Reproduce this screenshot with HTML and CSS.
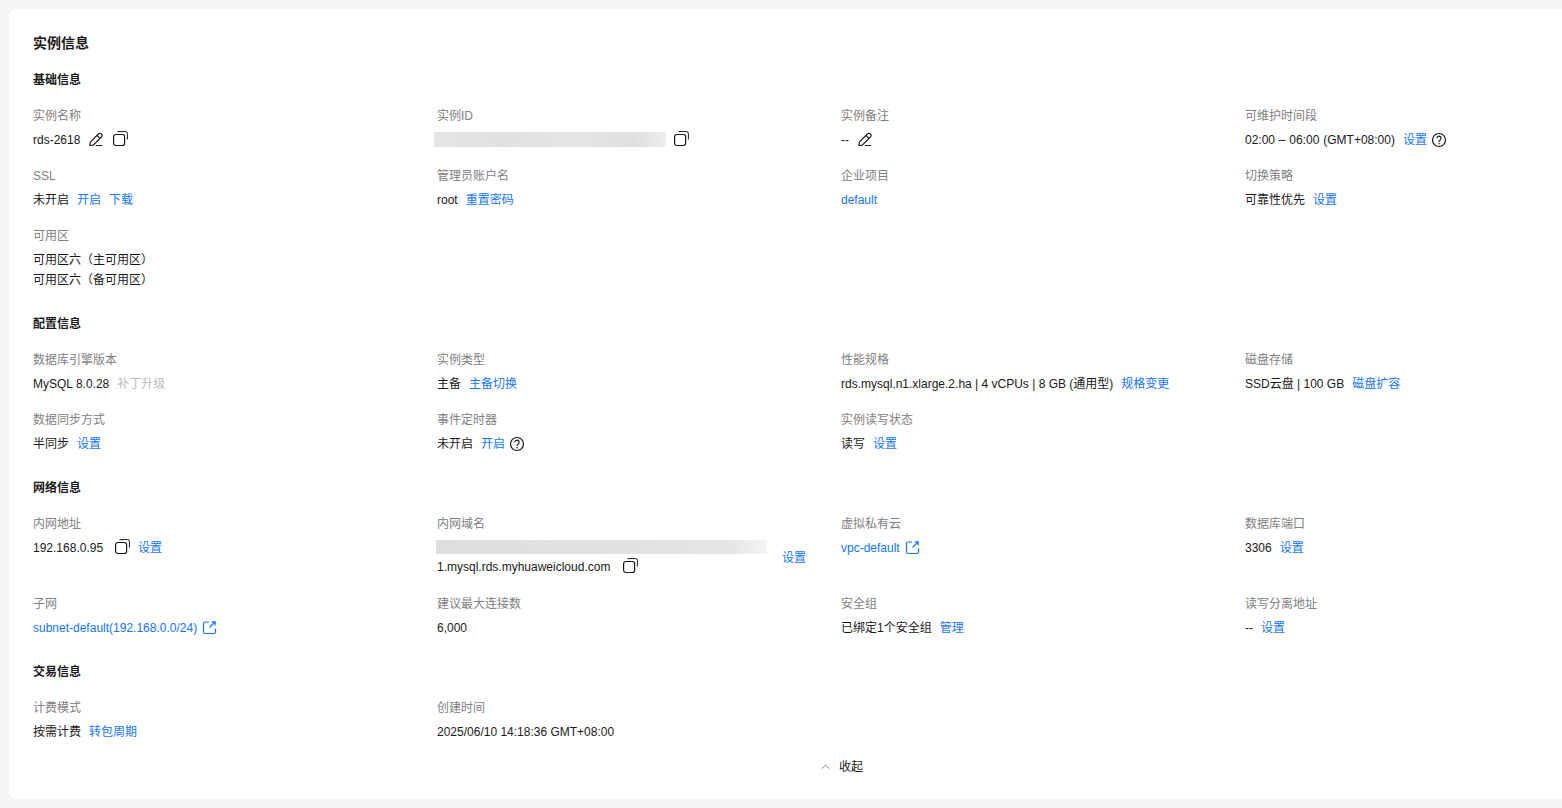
FILE: index.html
```html
<!DOCTYPE html>
<html lang="zh-CN">
<head>
<meta charset="utf-8">
<title>实例信息</title>
<link rel="stylesheet" href="styles.css">
</head>
<body>
<svg class="sprites" width="0" height="0" aria-hidden="true">
  <symbol id="i-edit" viewBox="0 0 16 16"><path d="M2.300 11.200 10.400 3a2.100 2.100 0 0 1 3 3l-8.200 8.100-3.400.3.500-3.200ZM9 4.500l2.900 2.900M7.800 14.500h6.400" fill="none" stroke="currentColor" stroke-width="1.100"/></symbol>
  <symbol id="i-copy" viewBox="0 0 16 16"><rect x="1.600" y="3.500" width="11" height="11" rx="2.200" fill="none" stroke="currentColor" stroke-width="1.200"/><path d="M5.500.6h8A1.800 1.800 0 0 1 15.400 2.500V8.500" fill="none" stroke="currentColor" stroke-width="1"/></symbol>
  <symbol id="i-help" viewBox="0 0 16 16"><circle cx="8" cy="8" r="6.500" fill="none" stroke="currentColor" stroke-width="1.200"/><path d="M5.900 6.300a2.100 2.100 0 1 1 3.400 1.600c-.8.600-1.300 1-1.300 2" fill="none" stroke="currentColor" stroke-width="1.200"/><circle cx="8" cy="11.700" r=".8" fill="currentColor"/></symbol>
  <symbol id="i-link" viewBox="0 0 16 16"><path d="M8 3H4A1.500 1.500 0 0 0 2.500 4.500v8.500A1.500 1.500 0 0 0 4 14.500h9a1.500 1.500 0 0 0 1.500-1.500V9.500M8.500 8.500 14 3M10.500 2.800H14.200V6.500" fill="none" stroke="currentColor" stroke-width="1.200"/></symbol>
</svg>
<main class="card">
  <h1 class="title">实例信息</h1>

  <section class="section">
    <h2 class="section-title">基础信息</h2>
    <div class="grid">
      <div class="item"><div class="label">实例名称</div><div class="value"><span>rds-2618</span><svg class="icon gap-l8"><use href="#i-edit"/></svg><svg class="icon gap-l8"><use href="#i-copy"/></svg></div></div>
      <div class="item"><div class="label">实例ID</div><div class="value"><span class="mask mask-id"></span><svg class="icon gap-l7"><use href="#i-copy"/></svg></div></div>
      <div class="item"><div class="label">实例备注</div><div class="value"><span>--</span><svg class="icon gap-l8"><use href="#i-edit"/></svg></div></div>
      <div class="item"><div class="label">可维护时间段</div><div class="value"><span class="window">02:00 – 06:00 (GMT+08:00)</span><a class="link">设置</a><svg class="icon help gap-l4"><use href="#i-help"/></svg></div></div>
      <div class="item"><div class="label">SSL</div><div class="value"><span>未开启</span><a class="link">开启</a><a class="link">下载</a></div></div>
      <div class="item"><div class="label">管理员账户名</div><div class="value"><span>root</span><a class="link">重置密码</a></div></div>
      <div class="item"><div class="label">企业项目</div><div class="value"><a class="link flush">default</a></div></div>
      <div class="item"><div class="label">切换策略</div><div class="value"><span>可靠性优先</span><a class="link">设置</a></div></div>
      <div class="item"><div class="label">可用区</div><div class="value stack"><span>可用区六（主可用区）</span><span>可用区六（备可用区）</span></div></div>
    </div>
  </section>

  <section class="section">
    <h2 class="section-title">配置信息</h2>
    <div class="grid">
      <div class="item"><div class="label">数据库引擎版本</div><div class="value"><span>MySQL 8.0.28</span><a class="link disabled">补丁升级</a></div></div>
      <div class="item"><div class="label">实例类型</div><div class="value"><span>主备</span><a class="link">主备切换</a></div></div>
      <div class="item"><div class="label">性能规格</div><div class="value"><span>rds.mysql.n1.xlarge.2.ha | 4 vCPUs | 8 GB (通用型)</span><a class="link">规格变更</a></div></div>
      <div class="item"><div class="label">磁盘存储</div><div class="value"><span>SSD云盘 | 100 GB</span><a class="link">磁盘扩容</a></div></div>
      <div class="item"><div class="label">数据同步方式</div><div class="value"><span>半同步</span><a class="link">设置</a></div></div>
      <div class="item"><div class="label">事件定时器</div><div class="value"><span>未开启</span><a class="link">开启</a><svg class="icon help gap-l4"><use href="#i-help"/></svg></div></div>
      <div class="item"><div class="label">实例读写状态</div><div class="value"><span>读写</span><a class="link">设置</a></div></div>
    </div>
  </section>

  <section class="section">
    <h2 class="section-title">网络信息</h2>
    <div class="grid">
      <div class="item"><div class="label">内网地址</div><div class="value"><span>192.168.0.95</span><svg class="icon gap-l11"><use href="#i-copy"/></svg><a class="link">设置</a></div></div>
      <div class="item"><div class="label">内网域名</div><div class="value domain"><div class="domain-text"><span class="mask mask-domain"></span><div class="domain-line"><span>1.mysql.rds.myhuaweicloud.com</span><svg class="icon gap-l12"><use href="#i-copy"/></svg></div></div><a class="link">设置</a></div></div>
      <div class="item"><div class="label">虚拟私有云</div><div class="value"><a class="link flush">vpc-default</a><svg class="icon blue gap-l4"><use href="#i-link"/></svg></div></div>
      <div class="item"><div class="label">数据库端口</div><div class="value"><span>3306</span><a class="link">设置</a></div></div>
      <div class="item"><div class="label">子网</div><div class="value"><a class="link flush">subnet-default(192.168.0.0/24)</a><svg class="icon blue gap-l4"><use href="#i-link"/></svg></div></div>
      <div class="item"><div class="label">建议最大连接数</div><div class="value"><span>6,000</span></div></div>
      <div class="item"><div class="label">安全组</div><div class="value"><span>已绑定1个安全组</span><a class="link">管理</a></div></div>
      <div class="item"><div class="label">读写分离地址</div><div class="value"><span>--</span><a class="link">设置</a></div></div>
    </div>
  </section>

  <section class="section">
    <h2 class="section-title">交易信息</h2>
    <div class="grid">
      <div class="item"><div class="label">计费模式</div><div class="value"><span>按需计费</span><a class="link">转包周期</a></div></div>
      <div class="item"><div class="label">创建时间</div><div class="value"><span>2025/06/10 14:18:36 GMT+08:00</span></div></div>
    </div>
  </section>

  <div class="collapse"><svg class="chevron" viewBox="0 0 10 6"><path d="M.8 5 5 1l4.200 4" fill="none" stroke="currentColor" stroke-width="1.100"/></svg><span>收起</span></div>
</main>
</body>
</html>
```
FILE: styles.css
```css
* { box-sizing: border-box; }
html, body { margin: 0; height: 100%; overflow: hidden; background: #f5f5f5; }
body {
  padding: 9px 0 0 9px;
  font-family: "Liberation Sans", "Noto Sans CJK SC", sans-serif;
  font-size: 12px;
  line-height: 20px;
  color: #191919;
}
.sprites { position: absolute; }
.card {
  width: 1664px;
  height: 790px;
  padding: 24px;
  background: #fff;
  border-radius: 8px;
}
.title { margin: 0; font-size: 14px; line-height: 20px; font-weight: 700; }
.section { margin-top: 16px; }
.section + .section { margin-top: 22px; }
.section-title { margin: 0 0 14px; font-size: 12px; line-height: 20px; font-weight: 700; padding-top: 1px; height: 20px; }
.grid { display: grid; grid-template-columns: repeat(4, 404px); row-gap: 12px; }
.label { height: 24px; line-height: 24px; padding-top: 1px; color: #808080; }
.value { display: flex; align-items: center; padding: 3px 0 1px; min-height: 24px; }
.stack { flex-direction: column; align-items: flex-start; }
.window { word-spacing: .5px; }
.link { margin-left: 8px; color: #1476ff; white-space: nowrap; }
.link.flush { margin-left: 0; }
.link.disabled { color: #bbb; }
.icon { width: 16px; height: 16px; flex: none; color: #191919; margin-bottom: 2px; }
.icon.help { margin-bottom: 0; }
.icon.blue { color: #1476ff; }
.gap-l4 { margin-left: 4px; }
.gap-l7 { margin-left: 7px; }
.gap-l8 { margin-left: 8px; }
.gap-l11 { margin-left: 11px; }
.gap-l12 { margin-left: 12px; }
.mask {
  display: block;
  background: linear-gradient(90deg, #e6e6e6, #e0e0e0 30%, #e6e6e6 60%, #dfdfdf 86%, #ededed);
}
.mask-id { width: 232px; height: 15px; margin-left: -3px; margin-bottom: 2px; }
.mask-domain {
  width: 331px;
  height: 14px;
  margin-left: -1px;
  margin-top: 3px;
  background: linear-gradient(90deg, #dedede, #e0e0e0 40%, #e2e2e2 65%, #e6e6e6 90%, #f6f6f6);
}
.domain { padding: 2px 0 3px; }
.domain-text { display: flex; flex-direction: column; }
.domain-line { display: flex; align-items: center; height: 20px; margin-top: 2px; padding-top: 1px; }
.domain .link { margin-left: 15px; margin-top: 2px; }
.collapse {
  display: flex;
  align-items: center;
  justify-content: center;
  gap: 9px;
  margin-top: 13px;
  height: 20px;
  padding-top: 1px;
}
.chevron { width: 9px; height: 6px; margin-left: 2px; color: #808080; }
```
